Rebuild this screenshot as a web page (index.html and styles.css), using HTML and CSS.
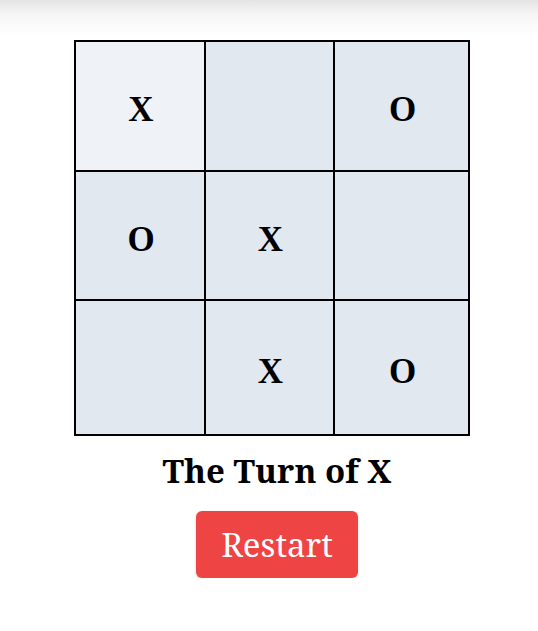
FILE: index.html
```html
<!DOCTYPE html>
<html lang="en">
<head>
    <meta charset="UTF-8">
    <meta name="viewport" content="width=device-width, initial-scale=1.0">
    <link rel="stylesheet" href="styles.css">
    <title>Tic Tac Toe</title>
</head>
<body>
    <div class="topShade"></div>
    <main class="game">
        <div class="board">
            <div class="cell light">X</div>
            <div class="cell"></div>
            <div class="cell">O</div>
            <div class="cell">O</div>
            <div class="cell">X</div>
            <div class="cell"></div>
            <div class="cell"></div>
            <div class="cell">X</div>
            <div class="cell">O</div>
        </div>
        <h2 class="turn">The Turn of X</h2>
        <button type="button" class="restart">Restart</button>
    </main>
</body>
</html>
```

FILE: styles.css
```css
body {
    margin: 0;
    background: #fff;
    font-family: "Noto Serif", "DejaVu Serif", serif;
}

.topShade {
    height: 36px;
    background: linear-gradient(#e4e4e4, #f6f6f6 40%, #fff);
}

.game {
    display: flex;
    flex-direction: column;
    align-items: center;
    padding-left: 16px;
}

.board {
    margin-top: 4px;
    display: grid;
    grid-template-columns: 128px 127px 133px;
    grid-template-rows: 128px 127px 133px;
    gap: 2px;
    background: #000;
    border: 2px solid #000;
    margin-left: -10px;
}

.cell {
    display: flex;
    align-items: center;
    justify-content: center;
    padding: 8px 0 0 2px;
    background: #e2e8f0;
    font-family: "Liberation Serif", serif;
    font-size: 35px;
    font-weight: bold;
}

.cell.light {
    background: #eff3f8;
}

.turn {
    margin: 12px 0 0;
    font-size: 33px;
    font-weight: bold;
}

.restart {
    margin-top: 18px;
    padding: 11px 25px;
    font-family: inherit;
    font-size: 33px;
    color: #fff;
    background: #ef4444;
    border: none;
    border-radius: 6px;
    box-shadow: 0 1px 3px rgba(0, 0, 0, 0.15);
    cursor: pointer;
}
```
